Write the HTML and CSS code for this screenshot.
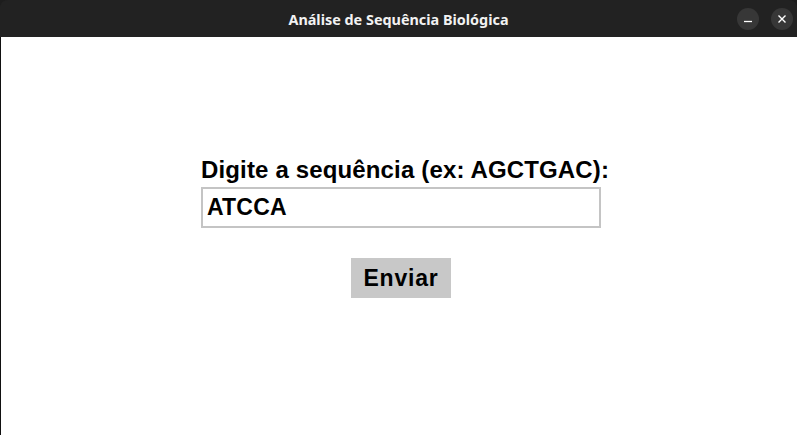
FILE: index.html
```html
<!DOCTYPE html>
<html lang="pt">
<head>
<meta charset="utf-8">
<title>Análise de Sequência Biológica</title>
<link rel="stylesheet" href="styles.css">
</head>
<body>
<div class="window">
  <header class="titlebar">
    <div class="title">Análise de Sequência Biológica</div>
    <div class="controls">
      <span class="ctl"><svg width="10" height="10" viewBox="0 0 10 10"><path d="M1 7.5h8" stroke="#fff" stroke-width="1.3"/></svg></span>
      <span class="ctl"><svg width="10" height="10" viewBox="0 0 10 10"><path d="M1.5 1.5l7 7M8.5 1.5l-7 7" stroke="#fff" stroke-width="1.4"/></svg></span>
    </div>
  </header>
  <main class="content">
    <div class="form">
      <label class="label" for="seq">Digite a sequência (ex: AGCTGAC):</label>
      <div class="entry" id="seq">ATCCA</div>
      <button class="send">Enviar</button>
    </div>
  </main>
</div>
</body>
</html>
```
FILE: styles.css
```css
html, body {
  margin: 0;
  padding: 0;
  width: 797px;
  height: 435px;
  overflow: hidden;
  background: #1d1d1d;
}
.window {
  width: 797px;
  height: 435px;
  display: flex;
  flex-direction: column;
  border-radius: 8px 8px 0 0;
  overflow: hidden;
  background: #222222;
}
.titlebar {
  height: 37px;
  flex: none;
  background: #222222;
  display: flex;
  align-items: center;
  justify-content: center;
  position: relative;
}
.title {
  color: #f2f2f2;
  font-family: "Noto Sans", "DejaVu Sans", sans-serif;
  font-weight: bold;
  font-size: 14.4px;
  margin-top: 2px;
}
.controls {
  position: absolute;
  right: 4px;
  top: 8px;
  display: flex;
  gap: 12px;
}
.ctl {
  width: 22px;
  height: 22px;
  border-radius: 50%;
  background: #373737;
  display: flex;
  align-items: center;
  justify-content: center;
}
.content {
  flex: 1;
  background: #ffffff;
  border-left: 1px solid #111;
  display: flex;
  justify-content: center;
}
.form {
  width: 400px;
  display: flex;
  flex-direction: column;
  align-items: center;
  padding-top: 118px;
  margin-left: 4px;
  font-family: "Liberation Sans", Arial, sans-serif;
  font-weight: bold;
  color: #000;
}
.label {
  font-size: 24px;
  line-height: 30px;
  letter-spacing: 0.15px;
  white-space: nowrap;
  align-self: flex-start;
}
.entry {
  box-sizing: border-box;
  width: 400px;
  height: 41px;
  margin-top: 2px;
  border: 2px solid #c4c4c4;
  font-size: 23px;
  line-height: 37px;
  padding-left: 4px;
  letter-spacing: 0.2px;
}
.send {
  margin-top: 30px;
  width: 100px;
  height: 40px;
  border: none;
  background: #c8c8c8;
  font-family: "Liberation Sans", Arial, sans-serif;
  font-weight: bold;
  font-size: 23px;
  letter-spacing: 0.8px;
  color: #000;
  padding: 0;
}
```
